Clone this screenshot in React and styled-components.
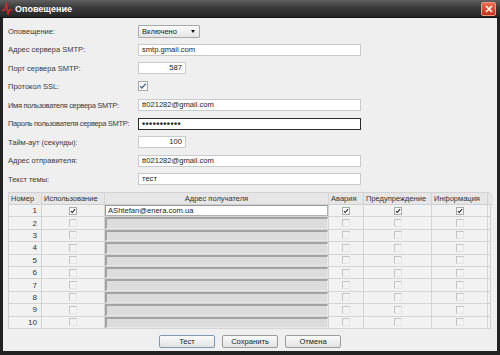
import React from 'react';
import styled, { createGlobalStyle } from 'styled-components';

const GlobalStyle = createGlobalStyle`
  html, body { margin: 0; padding: 0; background: #1f1f1f; }
  body { font-family: "Liberation Sans", Arial, sans-serif; }
`;

const Window = styled.div`
  width: 500px;
  height: 355px;
  box-sizing: border-box;
  display: flex;
  flex-direction: column;
  background: #222;
  padding: 0 3px 4px 3px;
`;

const TitleBar = styled.div`
  height: 18px;
  margin: 0 -3px;
  box-sizing: border-box;
  display: flex;
  align-items: center;
  padding: 0 4px 0 2px;
  background: linear-gradient(#606060, #3a3a3a 45%, #262626);
  border-bottom: 1px solid #111;
`;

const Title = styled.span`
  margin-left: 3px;
  flex: 1;
  color: #fff;
  font-size: 9px;
  font-weight: bold;
`;

const CloseBtn = styled.div`
  width: 13px;
  height: 12px;
  border-radius: 2px;
  border: 1px solid #f09a86;
  background: linear-gradient(#ee6a4c, #c8321b);
  display: flex;
  align-items: center;
  justify-content: center;
`;

const Content = styled.div`
  flex: 1;
  background: #efefef;
  padding: 4px 7px 0 5px;
  display: flex;
  flex-direction: column;
  font-size: 8px;
  color: #333;
`;

const Form = styled.div`
  display: grid;
  grid-template-columns: 130px 1fr;
  grid-auto-rows: 18.5px;
  align-items: center;
`;

const Label = styled.div`
  font-size: 7.5px;
  color: #3a3a3a;
  white-space: nowrap;
  letter-spacing: ${p => (p.$tight ? '-0.3px' : '0')};
`;

const Field = styled.div`
  box-sizing: border-box;
  width: ${p => p.$w}px;
  height: 12px;
  line-height: 10px;
  padding: 0 3px;
  background: #fff;
  border: 1px solid ${p => (p.$focus ? '#2a2a2a' : '#cacaca')};
  text-align: ${p => (p.$right ? 'right' : 'left')};
  color: #222;
  font-size: 7.6px;
  white-space: nowrap;
  overflow: hidden;
`;

const Dots = styled.span`
  font-size: 9px;
  font-weight: bold;
  letter-spacing: 0.4px;
`;

const Select = styled.div`
  position: relative;
  box-sizing: border-box;
  width: 62px;
  height: 13px;
  line-height: 11px;
  padding: 0 3px;
  border: 1px solid #a8a8a8;
  border-radius: 1px;
  background: linear-gradient(#fcfcfc, #e4e4e4);
  color: #222;
  font-size: 7.6px;
  &::after {
    content: '';
    position: absolute;
    right: 4px;
    top: 4px;
    border-left: 2.5px solid transparent;
    border-right: 2.5px solid transparent;
    border-top: 3px solid #111;
  }
`;

const Box = styled.span`
  box-sizing: border-box;
  display: inline-flex;
  align-items: center;
  justify-content: center;
  width: ${p => p.$size}px;
  height: ${p => p.$size}px;
  background: ${p => (p.$dim ? '#f3f3f3' : '#fafafa')};
  border: 1px solid ${p => (p.$dim ? '#c4c4c4' : '#a9a9a9')};
  border-right-color: ${p => (p.$dim ? '#e6e6e6' : '#a9a9a9')};
  border-bottom-color: ${p => (p.$dim ? '#e6e6e6' : '#a9a9a9')};
`;

const Check = ({ checked, dim, size = 8, color = '#222' }) => (
  <Box $size={size} $dim={dim}>
    {checked && (
      <svg width={size - 2} height={size - 2} viewBox="0 0 8 8">
        <path d="M1.2 4.2 L3 6 L6.8 1.6" fill="none" stroke={color} strokeWidth="1.4" />
      </svg>
    )}
  </Box>
);

const Table = styled.div`
  margin-top: 3.5px;
  width: 482px;
  display: grid;
  grid-template-columns: 33px 63px 224px 35px 68px 56px 3px;
  grid-template-rows: 12px repeat(10, 12.4px);
  border-top: 1px solid #d2d2d2;
  border-left: 1px solid #d2d2d2;
  box-sizing: border-box;
`;

const Head = styled.div`
  box-sizing: border-box;
  background: #e6e6e6;
  border-right: 1px solid ${p => (p.$last ? '#e6e6e6' : '#d4d4d4')};
  border-bottom: 1px solid #cfcfcf;
  font-size: 7.5px;
  line-height: 11px;
  padding: 0 2px;
  color: #333;
  text-align: ${p => p.$align || 'left'};
  white-space: nowrap;
  overflow: hidden;
`;

const Cell = styled.div`
  box-sizing: border-box;
  background: #f2f2f2;
  border-right: 1px solid #d4d4d4;
  border-bottom: 1px solid #d4d4d4;
  display: flex;
  align-items: center;
  justify-content: ${p => p.$justify || 'center'};
  padding: ${p => (p.$justify === 'flex-end' ? '0 4px 0 0' : '0')};
  font-size: 8px;
  color: #333;
  overflow: hidden;
`;

const AddrInput = styled.div`
  box-sizing: border-box;
  width: 100%;
  height: 100%;
  padding: 0 2px;
  line-height: 10px;
  font-size: 7.6px;
  color: #222;
  background: ${p => (p.$active ? '#fff' : '#dcdcdc')};
  border: 1px solid ${p => (p.$active ? '#b0b0b0' : '#e8e8e8')};
  border-top: ${p => (p.$active ? '1px solid #9a9a9a' : '2px solid #a3a3a3')};
  border-left: ${p => (p.$active ? '1px solid #9a9a9a' : '2px solid #a3a3a3')};
`;

const Buttons = styled.div`
  display: flex;
  justify-content: center;
  gap: 7px;
  margin-top: 6px;
  padding-left: 2px;
`;

const Button = styled.div`
  box-sizing: border-box;
  width: 56px;
  height: 13px;
  line-height: 11px;
  text-align: center;
  font-size: 7.6px;
  color: #222;
  border-radius: 2px;
  border: 1px solid ${p => (p.$default ? '#7c98b4' : '#9a9a9a')};
  background: linear-gradient(#fbfbfb, #e2e2e2);
`;

const rows = Array.from({ length: 10 }, (_, i) => i + 1);

export default function App() {
  return (
    <>
      <GlobalStyle />
      <Window>
        <TitleBar>
          <svg width="10" height="14" viewBox="0 0 10 14">
            <path d="M0 8 L3 8 L4.5 1 L6 13 L7 8 L10 8" fill="none" stroke="#d8242a" strokeWidth="1.3" />
          </svg>
          <Title>Оповещение</Title>
          <CloseBtn>
            <svg width="8" height="8" viewBox="0 0 8 8">
              <path d="M1 1 L7 7 M7 1 L1 7" stroke="#fff" strokeWidth="1.6" />
            </svg>
          </CloseBtn>
        </TitleBar>
        <Content>
          <Form>
            <Label>Оповещение:</Label>
            <Select>Включено</Select>
            <Label>Адрес сервера SMTP:</Label>
            <Field $w={223}>smtp.gmail.com</Field>
            <Label>Порт сервера SMTP:</Label>
            <Field $w={48} $right>587</Field>
            <Label>Протокол SSL:</Label>
            <div><Check checked size={10} color="#4a6a9a" /></div>
            <Label $tight>Имя пользователя сервера SMTP:</Label>
            <Field $w={223}>tt021282@gmail.com</Field>
            <Label $tight>Пароль пользователя сервера SMTP:</Label>
            <Field $w={223} $focus><Dots>•••••••••••</Dots></Field>
            <Label>Тайм-аут (секунды):</Label>
            <Field $w={48} $right>100</Field>
            <Label>Адрес отправителя:</Label>
            <Field $w={223}>tt021282@gmail.com</Field>
            <Label>Текст темы:</Label>
            <Field $w={223}>тест</Field>
          </Form>

          <Table>
            <Head>Номер</Head>
            <Head>Использование</Head>
            <Head $align="center">Адрес получателя</Head>
            <Head>Авария</Head>
            <Head>Предупреждение</Head>
            <Head>Информация</Head>
            <Head $last />
            {rows.map(n => {
              const on = n === 1;
              return (
                <React.Fragment key={n}>
                  <Cell $justify="flex-end">{n}</Cell>
                  <Cell><Check checked={on} dim={!on} /></Cell>
                  <Cell $justify="stretch">
                    <AddrInput $active={on}>{on ? 'AShtefan@enera.com.ua' : ''}</AddrInput>
                  </Cell>
                  <Cell><Check checked={on} dim={!on} /></Cell>
                  <Cell><Check checked={on} dim={!on} /></Cell>
                  <Cell><Check checked={on} dim={!on} /></Cell>
                  <Cell />
                </React.Fragment>
              );
            })}
          </Table>

          <Buttons>
            <Button $default>Тест</Button>
            <Button>Сохранить</Button>
            <Button>Отмена</Button>
          </Buttons>
        </Content>
      </Window>
    </>
  );
}
